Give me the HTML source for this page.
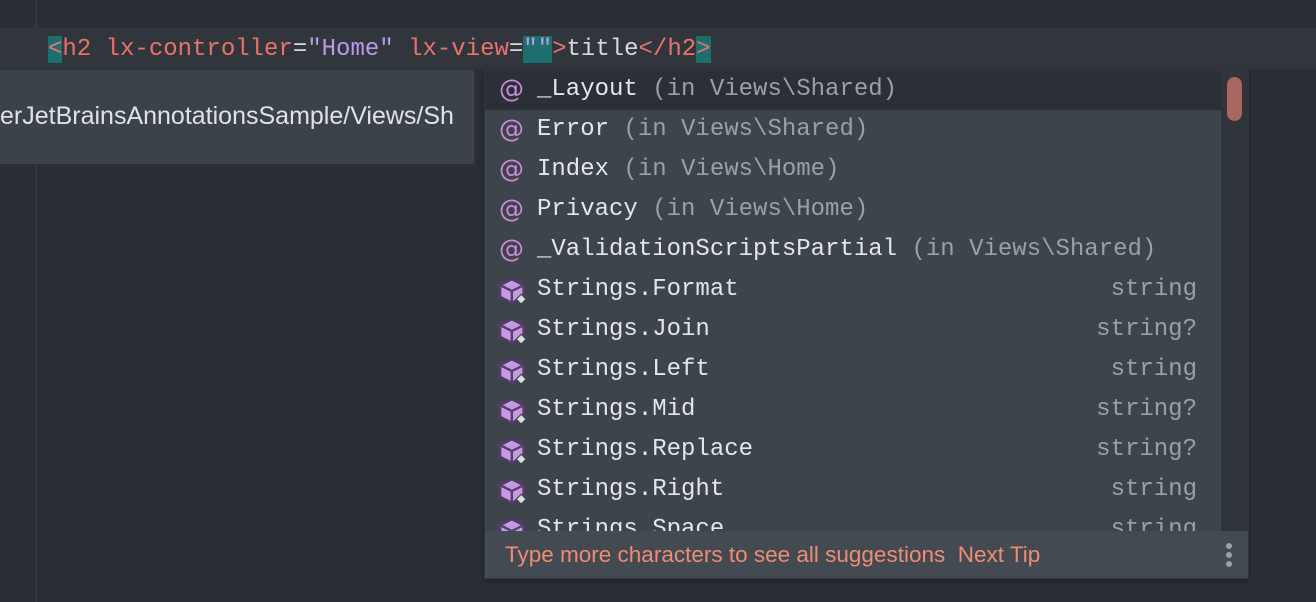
<!DOCTYPE html>
<html><head><style>
*{margin:0;padding:0;box-sizing:border-box}
body{width:1316px;height:602px;background:#2b2f35;position:relative;overflow:hidden;font-family:"Liberation Mono",monospace}
.gut{position:absolute;left:36px;top:0;width:1px;height:602px;background:#3a3f46}
.cur{position:absolute;left:0;top:28px;width:1316px;height:41px;background:#31363d}
.code{position:absolute;left:48px;top:33px;font-size:24px;line-height:34px;white-space:pre;color:#e8736c}
.code .hl{background:#1d6f6d}
.code .s{color:#b79ae8}.code .w{color:#d5d9de}.code .q{color:#e8736c}
.tip{position:absolute;left:0;top:69px;width:475px;height:96px;background:#3c424a;border:1px solid #2e3237;border-left:none;font-family:"Liberation Sans",sans-serif;font-size:25px;color:#dfe2e6;padding:32px 0 0 0;white-space:nowrap;overflow:hidden}
.pop{position:absolute;left:484px;top:69px;width:765px;height:510px;background:#3e444c;border:1px solid #33383e;box-shadow:0 2px 6px rgba(0,0,0,.3);overflow:hidden}
.row{position:absolute;left:0;width:736px;height:40px;font-size:24px;line-height:40px;color:#e3e6ea;white-space:pre}
.row.sel{background:#2b3036}
.at{position:absolute;left:14px;top:-1px;color:#c98ad8;font-family:"DejaVu Sans",sans-serif;font-size:25px}
.nm{position:absolute;left:52px}
.g{color:#9aa0a8}
.ty{position:absolute;right:24px;color:#9aa0a8}
.ic{position:absolute;left:14px;top:7px}
.sb{position:absolute;left:736px;top:0;width:29px;height:461px;background:#30353b}
.th{position:absolute;left:742px;top:7px;width:15px;height:44px;border-radius:8px;background:#a7665e}
.ft{position:absolute;left:0;top:461px;width:765px;height:49px;background:#434a52;font-family:"Liberation Sans",sans-serif;font-size:22.5px;color:#ef8c72;line-height:48px;padding-left:20px;white-space:pre}
.dots{position:absolute;right:18px;top:12px;width:6px}
.dots i{display:block;width:6px;height:6px;border-radius:3px;background:#9aa0a8;margin-bottom:3px}
</style></head><body>
<div class="gut"></div>
<div class="cur"></div>
<div class="code"><span class="hl">&lt;</span>h2 lx-controller<span class="w">=</span><span class="s">"Home"</span> lx-view<span class="w">=</span><span class="hl s">""</span><span class="q">&gt;</span><span class="w">title</span>&lt;/h2<span class="hl">&gt;</span></div>
<div class="tip">erJetBrainsAnnotationsSample/Views/Sh</div>
<div class="pop">
<div class="row sel" style="top:0"><span class="at">@</span><span class="nm">_Layout <span class="g">(in Views\Shared)</span></span></div>
<div class="row" style="top:40px"><span class="at">@</span><span class="nm">Error <span class="g">(in Views\Shared)</span></span></div>
<div class="row" style="top:80px"><span class="at">@</span><span class="nm">Index <span class="g">(in Views\Home)</span></span></div>
<div class="row" style="top:120px"><span class="at">@</span><span class="nm">Privacy <span class="g">(in Views\Home)</span></span></div>
<div class="row" style="top:160px"><span class="at">@</span><span class="nm">_ValidationScriptsPartial <span class="g">(in Views\Shared)</span></span></div>
<div class="row" style="top:200px"><svg class="ic" width="28" height="28" viewBox="0 0 24 24"><path d="M11 2 L21 7 L21 17 L11 22 L1 17 L1 7Z" fill="#c49ae0" stroke="#5a3a6e" stroke-width="2"/><path d="M1 7 L11 12 L21 7 M11 12 L11 22" fill="none" stroke="#5a3a6e" stroke-width="2"/><rect x="16" y="16" width="6" height="6" transform="rotate(45 19 19)" fill="#ddd" stroke="#3e444c"/></svg><span class="nm">Strings.Format</span><span class="ty">string</span></div>
<div class="row" style="top:240px"><svg class="ic" width="28" height="28" viewBox="0 0 24 24"><path d="M11 2 L21 7 L21 17 L11 22 L1 17 L1 7Z" fill="#c49ae0" stroke="#5a3a6e" stroke-width="2"/><path d="M1 7 L11 12 L21 7 M11 12 L11 22" fill="none" stroke="#5a3a6e" stroke-width="2"/><rect x="16" y="16" width="6" height="6" transform="rotate(45 19 19)" fill="#ddd" stroke="#3e444c"/></svg><span class="nm">Strings.Join</span><span class="ty">string?</span></div>
<div class="row" style="top:280px"><svg class="ic" width="28" height="28" viewBox="0 0 24 24"><path d="M11 2 L21 7 L21 17 L11 22 L1 17 L1 7Z" fill="#c49ae0" stroke="#5a3a6e" stroke-width="2"/><path d="M1 7 L11 12 L21 7 M11 12 L11 22" fill="none" stroke="#5a3a6e" stroke-width="2"/><rect x="16" y="16" width="6" height="6" transform="rotate(45 19 19)" fill="#ddd" stroke="#3e444c"/></svg><span class="nm">Strings.Left</span><span class="ty">string</span></div>
<div class="row" style="top:320px"><svg class="ic" width="28" height="28" viewBox="0 0 24 24"><path d="M11 2 L21 7 L21 17 L11 22 L1 17 L1 7Z" fill="#c49ae0" stroke="#5a3a6e" stroke-width="2"/><path d="M1 7 L11 12 L21 7 M11 12 L11 22" fill="none" stroke="#5a3a6e" stroke-width="2"/><rect x="16" y="16" width="6" height="6" transform="rotate(45 19 19)" fill="#ddd" stroke="#3e444c"/></svg><span class="nm">Strings.Mid</span><span class="ty">string?</span></div>
<div class="row" style="top:360px"><svg class="ic" width="28" height="28" viewBox="0 0 24 24"><path d="M11 2 L21 7 L21 17 L11 22 L1 17 L1 7Z" fill="#c49ae0" stroke="#5a3a6e" stroke-width="2"/><path d="M1 7 L11 12 L21 7 M11 12 L11 22" fill="none" stroke="#5a3a6e" stroke-width="2"/><rect x="16" y="16" width="6" height="6" transform="rotate(45 19 19)" fill="#ddd" stroke="#3e444c"/></svg><span class="nm">Strings.Replace</span><span class="ty">string?</span></div>
<div class="row" style="top:400px"><svg class="ic" width="28" height="28" viewBox="0 0 24 24"><path d="M11 2 L21 7 L21 17 L11 22 L1 17 L1 7Z" fill="#c49ae0" stroke="#5a3a6e" stroke-width="2"/><path d="M1 7 L11 12 L21 7 M11 12 L11 22" fill="none" stroke="#5a3a6e" stroke-width="2"/><rect x="16" y="16" width="6" height="6" transform="rotate(45 19 19)" fill="#ddd" stroke="#3e444c"/></svg><span class="nm">Strings.Right</span><span class="ty">string</span></div>
<div class="row" style="top:440px"><svg class="ic" width="28" height="28" viewBox="0 0 24 24"><path d="M11 2 L21 7 L21 17 L11 22 L1 17 L1 7Z" fill="#c49ae0" stroke="#5a3a6e" stroke-width="2"/><path d="M1 7 L11 12 L21 7 M11 12 L11 22" fill="none" stroke="#5a3a6e" stroke-width="2"/></svg><span class="nm">Strings.Space</span><span class="ty">string</span></div>
<div class="sb"></div><div class="th"></div>
<div class="ft">Type more characters to see all suggestions  Next Tip<div class="dots"><i></i><i></i><i></i></div></div>
</div>
</body></html>
